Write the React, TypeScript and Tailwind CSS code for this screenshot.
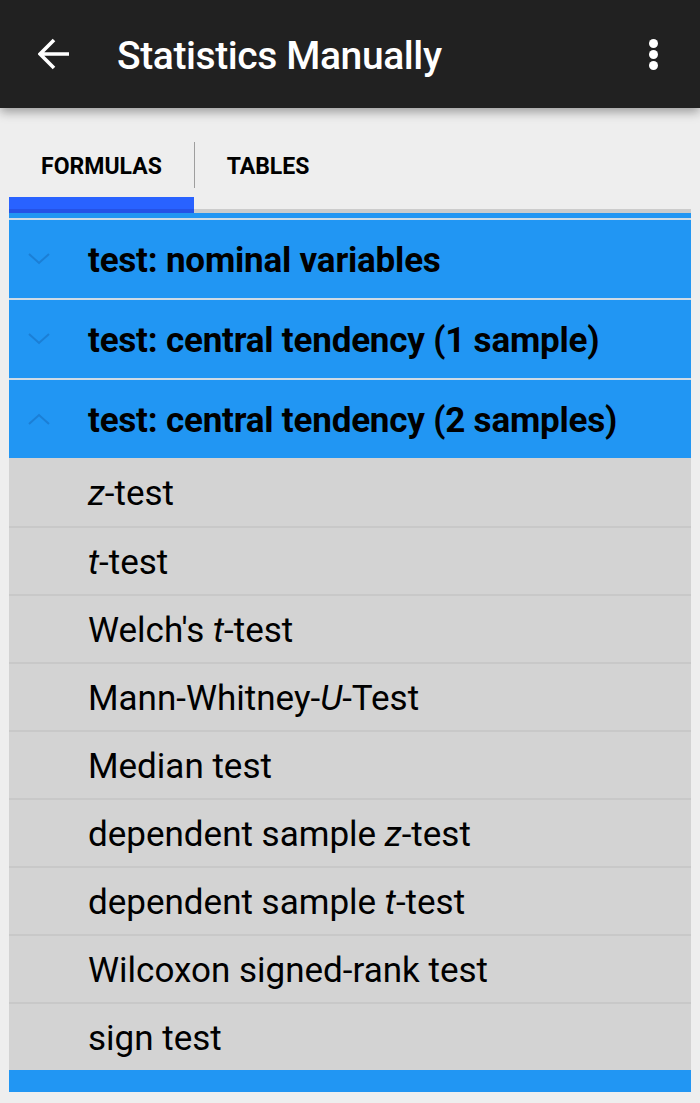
import React from 'react'

type Item = { parts: { text: string; italic?: boolean }[] }

const items: Item[] = [
  { parts: [{ text: 'z', italic: true }, { text: '-test' }] },
  { parts: [{ text: 't', italic: true }, { text: '-test' }] },
  { parts: [{ text: "Welch's " }, { text: 't', italic: true }, { text: '-test' }] },
  { parts: [{ text: 'Mann-Whitney-' }, { text: 'U', italic: true }, { text: '-Test' }] },
  { parts: [{ text: 'Median test' }] },
  { parts: [{ text: 'dependent sample ' }, { text: 'z', italic: true }, { text: '-test' }] },
  { parts: [{ text: 'dependent sample ' }, { text: 't', italic: true }, { text: '-test' }] },
  { parts: [{ text: 'Wilcoxon signed-rank test' }] },
  { parts: [{ text: 'sign test' }] },
]

const groups = [
  { title: 'test: nominal variables', open: false },
  { title: 'test: central tendency (1 sample)', open: false },
  { title: 'test: central tendency (2 samples)', open: true },
]

function Chevron({ up }: { up: boolean }) {
  return (
    <svg width="24" height="14" viewBox="0 0 24 14" className="shrink-0">
      <path
        d={up ? 'M2 12 L12 3 L22 12' : 'M2 2 L12 11 L22 2'}
        fill="none"
        stroke="#1b7fd6"
        strokeWidth="2"
      />
    </svg>
  )
}

export default function App() {
  return (
    <div
      className="w-[700px] h-[1103px] bg-[#eeeeee] overflow-hidden"
      style={{ fontFamily: 'Roboto, "Liberation Sans", sans-serif' }}
    >
      {/* toolbar */}
      <div className="relative z-10 h-[108px] bg-[#212121] flex items-center shadow-[0_4px_10px_rgba(0,0,0,0.35)]">
        <svg width="32" height="32" viewBox="0 0 32 32" className="ml-[38px]">
          <path d="M2 16 H31 M16 2 L2 16 L16 30" fill="none" stroke="#fff" strokeWidth="3.6" />
        </svg>
        <div className="ml-[47px] pt-[5px] text-white text-[39px] font-medium tracking-[-0.4px] leading-none flex-1">
          Statistics Manually
        </div>
        <div className="mr-[42px] flex flex-col gap-[2px]">
          <div className="w-[9px] h-[9px] rounded-full bg-white" />
          <div className="w-[9px] h-[9px] rounded-full bg-white" />
          <div className="w-[9px] h-[9px] rounded-full bg-white" />
        </div>
      </div>

      <div className="px-[9px]">
        {/* tabs */}
        <div className="flex mt-[34px] mb-[9px] h-[46px] items-center">
          <div className="w-[185px] pt-[4px] text-center text-[23px] font-bold text-black">FORMULAS</div>
          <div className="w-px h-[46px] bg-[#9e9e9e]" />
          <div className="w-[146px] pt-[4px] text-center text-[23px] font-bold text-black">TABLES</div>
        </div>
        <div className="flex h-[16px]">
          <div className="w-[185px] flex flex-col">
            <div className="h-[12px] bg-[#2962ff]" />
            <div className="h-[4px] bg-[#2552e6]" />
          </div>
          <div className="flex-1 flex flex-col">
            <div className="h-[12px]" />
            <div className="h-[4px] bg-[#cccccc]" />
          </div>
        </div>
        <div className="h-[5px] bg-[#2196f3]" />

        {/* accordion */}
        {groups.map(g => (
          <div key={g.title}>
            <div className="h-[80px] bg-[#2196f3] border-t-2 border-[#cfdbe6] flex items-center">
              <div className="w-[79px] pl-[18px] flex items-center">
                <Chevron up={g.open} />
              </div>
              <span className="pt-[4px] text-[35px] font-bold text-black tracking-[-0.2px]">{g.title}</span>
            </div>
            {g.open && (
              <div className="bg-[#d3d3d3]">
                {items.map((it, i) => (
                  <div
                    key={i}
                    className={`h-[68px] flex items-center pl-[79px] text-[35px] text-black ${i > 0 ? 'border-t-2 border-[#c8c8c8]' : ''}`}
                  >
                    <span className="pt-[4px] whitespace-pre">
                      {it.parts.map((p, j) => (
                        <span key={j} className={p.italic ? 'italic' : ''}>
                          {p.text}
                        </span>
                      ))}
                    </span>
                  </div>
                ))}
              </div>
            )}
          </div>
        ))}
        <div className="h-[22px] bg-[#2196f3]" />
      </div>
    </div>
  )
}
